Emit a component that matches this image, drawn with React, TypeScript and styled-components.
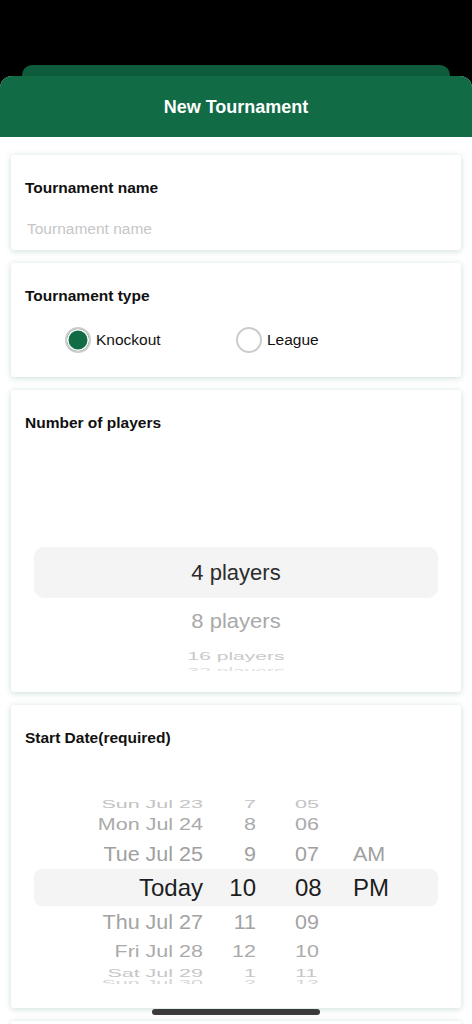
import * as React from 'react';
import styled, { createGlobalStyle } from 'styled-components';

const GlobalStyle = createGlobalStyle`
  html, body {
    margin: 0;
    padding: 0;
    background: #000;
  }
  * {
    box-sizing: border-box;
  }
`;

const GREEN = '#116b45';

const Screen = styled.div`
  position: relative;
  width: 472px;
  height: 1024px;
  overflow: hidden;
  background: #000;
  padding-top: 65px;
  font-family: 'Liberation Sans', Arial, sans-serif;
  color: #111;
`;

const BackSheet = styled.div`
  height: 11px;
  margin: 0 22px;
  background: #0e5c3b;
  border-radius: 10px 10px 0 0;
`;

const Sheet = styled.div`
  display: flex;
  flex-direction: column;
  background: #fff;
  border-radius: 12px 12px 0 0;
  min-height: 960px;
`;

const Header = styled.header`
  display: flex;
  align-items: center;
  justify-content: center;
  height: 61px;
  padding-top: 1px;
  background: ${GREEN};
  border-radius: 12px 12px 0 0;
  color: #fff;
  font-size: 18px;
  font-weight: 700;
`;

const Content = styled.div`
  display: flex;
  flex-direction: column;
  gap: 13px;
  padding: 18px 11px;
`;

const Card = styled.section<{ $bottom?: number }>`
  display: flex;
  flex-direction: column;
  padding: 24px 14px ${p => p.$bottom ?? 0}px;
  background: #fff;
  border-radius: 3px;
  box-shadow: 0 1px 6px rgba(17, 107, 69, 0.22);
`;

const Label = styled.div`
  font-size: 15.5px;
  line-height: 17px;
  font-weight: 700;
  color: #111;
`;

const Input = styled.input`
  margin-top: 11px;
  height: 43px;
  padding: 0 2px;
  border: none;
  outline: none;
  background: transparent;
  font-family: inherit;
  font-size: 15.5px;
  color: #111;
  &::placeholder {
    color: #c6c6c8;
  }
`;

const RadioRow = styled.div`
  display: flex;
  align-items: center;
  height: 40px;
  margin-top: 16px;
  padding-left: 40px;
`;

const RadioOption = styled.label`
  display: flex;
  align-items: center;
  gap: 5px;
  width: 171px;
  font-size: 15.5px;
  color: #111;
`;

const RadioCircle = styled.span<{ $checked?: boolean }>`
  width: 26px;
  height: 26px;
  border-radius: 50%;
  border: 2px solid #cccccc;
  background: ${p => (p.$checked ? GREEN : '#fff')};
  box-shadow: ${p => (p.$checked ? 'inset 0 0 0 1.5px #fff' : 'none')};
`;

const Picker = styled.div<{ $top: number; $gap: number }>`
  display: flex;
  flex-direction: column;
  margin: ${p => p.$gap}px 9px 0;
  padding-top: ${p => p.$top}px;
`;

type Edge = 'start' | 'end' | 'center';

const WheelRow = styled.div<{ $h: number; $selected?: boolean; $radius?: number; $edge?: Edge }>`
  height: ${p => p.$h}px;
  display: flex;
  align-items: ${p => p.$edge ?? 'center'};
  justify-content: center;
  overflow: hidden;
  background: ${p => (p.$selected ? '#f4f4f4' : 'transparent')};
  border-radius: ${p => p.$radius ?? 8}px;
`;

const DateRow = styled(WheelRow)`
  display: grid;
  grid-template-columns: 169px 53px 97px 1fr;
`;

const WheelText = styled.span<{
  $size: number;
  $scale: number;
  $color: string;
  $align?: string;
  $pad?: number;
  $edge?: Edge;
}>`
  display: block;
  font-size: ${p => p.$size}px;
  line-height: ${p => p.$size}px;
  color: ${p => p.$color};
  text-align: ${p => p.$align ?? 'center'};
  padding-left: ${p => p.$pad ?? 0}px;
  white-space: nowrap;
  transform-origin: ${p => (p.$edge === 'start' ? 'top' : p.$edge === 'end' ? 'bottom' : 'center')};
  transform: scaleY(${p => p.$scale});
`;

const HomeIndicator = styled.div`
  position: absolute;
  left: 50%;
  bottom: 9px;
  width: 168px;
  height: 6px;
  margin-left: -84px;
  border-radius: 3px;
  background: #3b3b3b;
`;

type PlayerRow = { text: string; h: number; size: number; scale: number; color: string; selected?: boolean; edge?: Edge };

const playerRows: PlayerRow[] = [
  { text: '4 players', h: 51, size: 22, scale: 1, color: '#2c2c2c', selected: true },
  { text: '8 players', h: 47, size: 22, scale: 0.9, color: '#a9a9a9' },
  { text: '16 players', h: 21, size: 21, scale: 0.55, color: '#c9c9c9' },
  { text: '32 players', h: 5, size: 21, scale: 0.42, color: '#dedede', edge: 'start' },
];

type DateItem = {
  d: string;
  hr: string;
  m: string;
  p: string;
  h: number;
  scale: number;
  color: string;
  selected?: boolean;
  edge?: Edge;
};

const dateRows: DateItem[] = [
  { d: 'Sat Jul 22', hr: '6', m: '04', p: '', h: 8, scale: 0.5, color: '#c8c8c8', edge: 'end' },
  { d: 'Sun Jul 23', hr: '7', m: '05', p: '', h: 16, scale: 0.55, color: '#c3c3c3' },
  { d: 'Mon Jul 24', hr: '8', m: '06', p: '', h: 30, scale: 0.8, color: '#aaaaaa' },
  { d: 'Tue Jul 25', hr: '9', m: '07', p: 'AM', h: 29, scale: 0.97, color: '#a0a0a0' },
  { d: 'Today', hr: '10', m: '08', p: 'PM', h: 37, scale: 1, color: '#1d1d1f', selected: true },
  { d: 'Thu Jul 27', hr: '11', m: '09', p: '', h: 34, scale: 0.97, color: '#a3a3a3' },
  { d: 'Fri Jul 28', hr: '12', m: '10', p: '', h: 23, scale: 0.8, color: '#ababab' },
  { d: 'Sat Jul 29', hr: '1', m: '11', p: '', h: 16, scale: 0.5, color: '#c6c6c6' },
  { d: 'Sun Jul 30', hr: '2', m: '12', p: '', h: 5, scale: 0.42, color: '#d6d6d6', edge: 'start' },
];

export default function App() {
  return (
    <>
      <GlobalStyle />
      <Screen>
        <BackSheet />
        <Sheet>
          <Header>New Tournament</Header>
          <Content>
            <Card>
              <Label>Tournament name</Label>
              <Input placeholder="Tournament name" />
            </Card>

            <Card $bottom={17}>
              <Label>Tournament type</Label>
              <RadioRow>
                <RadioOption>
                  <RadioCircle $checked />
                  Knockout
                </RadioOption>
                <RadioOption>
                  <RadioCircle />
                  League
                </RadioOption>
              </RadioRow>
            </Card>

            <Card $bottom={21}>
              <Label>Number of players</Label>
              <Picker $top={74} $gap={42}>
                {playerRows.map(r => (
                  <WheelRow key={r.text} $h={r.h} $selected={r.selected} $radius={10} $edge={r.edge}>
                    <WheelText $size={r.size} $scale={r.scale} $color={r.color} $edge={r.edge}>
                      {r.text}
                    </WheelText>
                  </WheelRow>
                ))}
              </Picker>
            </Card>

            <Card $bottom={24}>
              <Label>Start Date(required)</Label>
              <Picker $top={0} $gap={40}>
                {dateRows.map(r => {
                  const size = r.selected ? 24 : 21.5;
                  const cell = { $size: size, $scale: r.scale, $color: r.color, $edge: r.edge };
                  return (
                    <DateRow key={r.d} $h={r.h} $selected={r.selected} $edge={r.edge}>
                      <WheelText {...cell} $align="right">
                        {r.d}
                      </WheelText>
                      <WheelText {...cell} $align="right">
                        {r.hr}
                      </WheelText>
                      <WheelText {...cell} $align="left" $pad={39}>
                        {r.m}
                      </WheelText>
                      <WheelText {...cell} $align="left">
                        {r.p}
                      </WheelText>
                    </DateRow>
                  );
                })}
              </Picker>
            </Card>

            <Card $bottom={40}>
              <Label>End Date</Label>
            </Card>
          </Content>
        </Sheet>
        <HomeIndicator />
      </Screen>
    </>
  );
}
